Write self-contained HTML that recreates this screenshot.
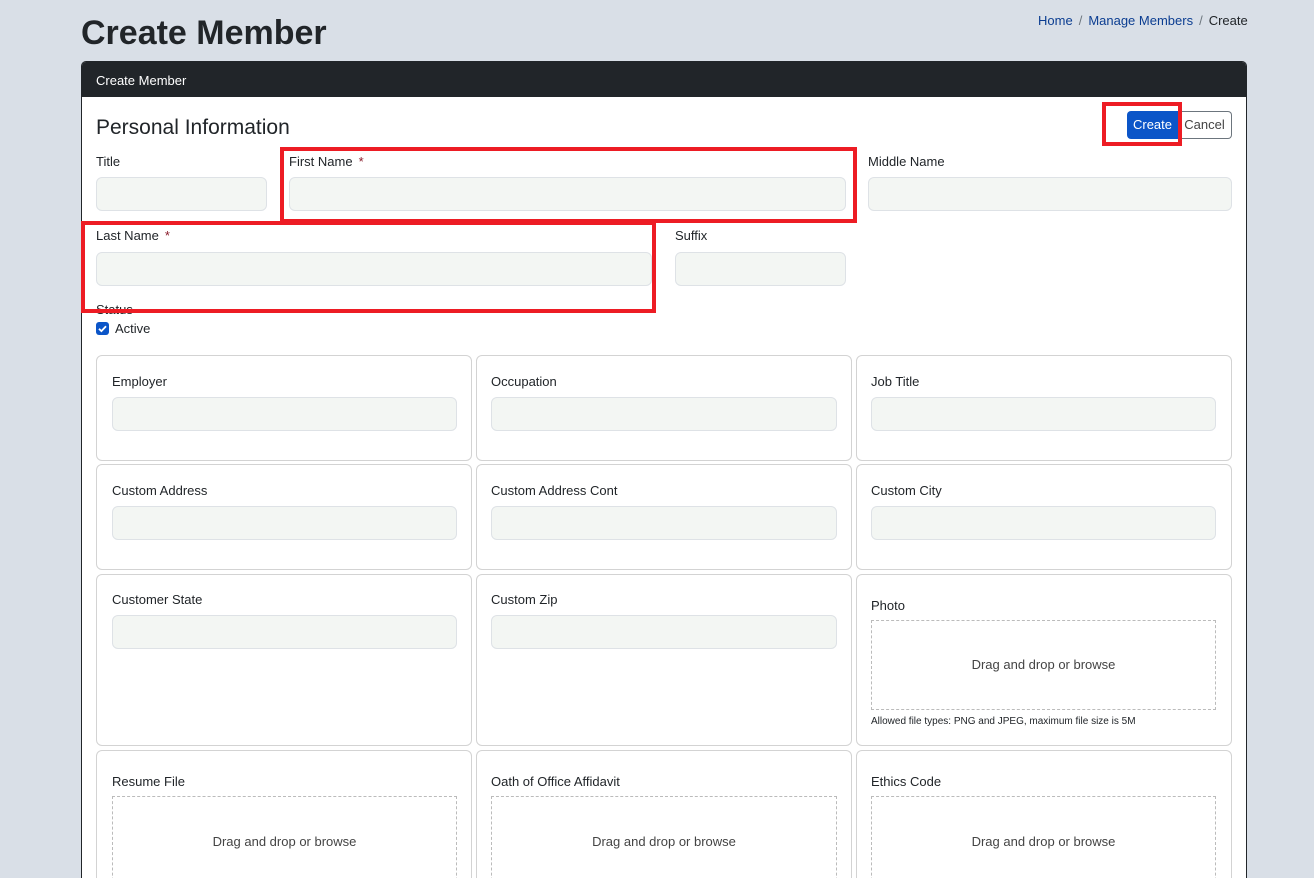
<!DOCTYPE html>
<html><head><meta charset="utf-8"><style>
*{box-sizing:border-box;margin:0;padding:0}
html,body{width:1314px;height:878px;overflow:hidden}
body{background:#d9dfe7;font-family:"Liberation Sans",sans-serif;color:#212529;position:relative}
.a{position:absolute}
h1{position:absolute;left:81px;top:14px;font-size:34px;font-weight:bold;color:#212529}
.bc{position:absolute;left:1038px;top:13px;font-size:13px;color:#212529}
.bc span.l{color:#0b3d91}
.bc .s{color:#6c757d;margin:0 6px}
.card{position:absolute;left:81px;top:61px;width:1166px;height:830px;background:#fff;border:1px solid #212529;border-radius:5px;overflow:hidden}
.hd{position:absolute;left:0;top:0;width:100%;height:35px;background:#212529;color:#fff;font-size:13px;padding:11px 14px}
.lb{position:absolute;font-size:13px;color:#212529}
.in{position:absolute;height:34px;background:#f3f6f3;border:1px solid #dee2e6;border-radius:6px}
.red{position:absolute;border:4px solid #ed1c24}
.box{position:absolute;border:1px solid #d3d3d3;border-radius:6px;background:#fff}
.dz{position:absolute;border:1px dashed #bbb;font-size:13px;color:#444;text-align:center}
.req{color:#8a1c2b;margin-left:6px}
#wrap{position:absolute;left:0;top:0;width:1314px;height:878px;overflow:hidden}
</style></head><body><div id="wrap">
<h1>Create Member</h1>
<div class="bc"><span class="l">Home</span><span class="s">/</span><span class="l">Manage Members</span><span class="s">/</span>Create</div>
<div class="card"><div class="hd">Create Member</div></div>

<div class="a" style="left:96px;top:116px;font-size:21px;color:#212529">Personal Information</div>
<div class="a" style="left:1127px;top:111px;width:51px;height:28px;background:#0b55c8;border-radius:4px 0 0 4px;color:#fff;font-size:13px;text-align:center;line-height:28px">Create</div>
<div class="a" style="left:1178px;top:111px;width:54px;height:28px;border:1px solid #6c757d;border-left:none;border-radius:0 4px 4px 0;color:#444;font-size:13px;text-align:center;line-height:26px">Cancel</div>

<div class="lb" style="left:96px;top:154px">Title</div>
<div class="in" style="left:96px;top:177px;width:171px"></div>
<div class="lb" style="left:289px;top:154px">First Name<span class="req">*</span></div>
<div class="in" style="left:289px;top:177px;width:557px"></div>
<div class="lb" style="left:868px;top:154px">Middle Name</div>
<div class="in" style="left:868px;top:177px;width:364px"></div>
<div class="lb" style="left:96px;top:228px">Last Name<span class="req">*</span></div>
<div class="in" style="left:96px;top:252px;width:556px"></div>
<div class="lb" style="left:675px;top:228px">Suffix</div>
<div class="in" style="left:675px;top:252px;width:171px"></div>
<div class="lb" style="left:96px;top:302px">Status</div>
<div class="a" style="left:96px;top:322px;width:13px;height:13px;background:#0b55c8;border-radius:3px"><svg width="13" height="13" viewBox="0 0 13 13"><path d="M3 6.8l2.4 2.3L10 4.2" stroke="#fff" stroke-width="1.8" fill="none"/></svg></div>
<div class="lb" style="left:115px;top:321px">Active</div>

<div class="red" style="left:280px;top:147px;width:577px;height:76px"></div>
<div class="red" style="left:81px;top:221px;width:575px;height:92px"></div>
<div class="red" style="left:1102px;top:102px;width:80px;height:44px"></div>

<div class="box" style="left:96px;top:355px;width:376px;height:106px"></div>
<div class="box" style="left:476px;top:355px;width:376px;height:106px"></div>
<div class="box" style="left:856px;top:355px;width:376px;height:106px"></div>
<div class="lb" style="left:112px;top:374px">Employer</div><div class="in" style="left:112px;top:397px;width:345px"></div>
<div class="lb" style="left:491px;top:374px">Occupation</div><div class="in" style="left:491px;top:397px;width:346px"></div>
<div class="lb" style="left:871px;top:374px">Job Title</div><div class="in" style="left:871px;top:397px;width:345px"></div>

<div class="box" style="left:96px;top:464px;width:376px;height:106px"></div>
<div class="box" style="left:476px;top:464px;width:376px;height:106px"></div>
<div class="box" style="left:856px;top:464px;width:376px;height:106px"></div>
<div class="lb" style="left:112px;top:483px">Custom Address</div><div class="in" style="left:112px;top:506px;width:345px"></div>
<div class="lb" style="left:491px;top:483px">Custom Address Cont</div><div class="in" style="left:491px;top:506px;width:346px"></div>
<div class="lb" style="left:871px;top:483px">Custom City</div><div class="in" style="left:871px;top:506px;width:345px"></div>

<div class="box" style="left:96px;top:574px;width:376px;height:172px"></div>
<div class="box" style="left:476px;top:574px;width:376px;height:172px"></div>
<div class="box" style="left:856px;top:574px;width:376px;height:172px"></div>
<div class="lb" style="left:112px;top:592px">Customer State</div><div class="in" style="left:112px;top:615px;width:345px"></div>
<div class="lb" style="left:491px;top:592px">Custom Zip</div><div class="in" style="left:491px;top:615px;width:346px"></div>
<div class="lb" style="left:871px;top:598px">Photo</div>
<div class="dz" style="left:871px;top:620px;width:345px;height:90px;line-height:88px">Drag and drop or browse</div>
<div class="a" style="left:871px;top:716px;font-size:10px;color:#212529">Allowed file types: PNG and JPEG, maximum file size is 5M</div>

<div class="box" style="left:96px;top:750px;width:376px;height:150px"></div>
<div class="box" style="left:476px;top:750px;width:376px;height:150px"></div>
<div class="box" style="left:856px;top:750px;width:376px;height:150px"></div>
<div class="lb" style="left:112px;top:774px">Resume File</div>
<div class="dz" style="left:112px;top:796px;width:345px;height:100px;line-height:90px">Drag and drop or browse</div>
<div class="lb" style="left:491px;top:774px">Oath of Office Affidavit</div>
<div class="dz" style="left:491px;top:796px;width:346px;height:100px;line-height:90px">Drag and drop or browse</div>
<div class="lb" style="left:871px;top:774px">Ethics Code</div>
<div class="dz" style="left:871px;top:796px;width:345px;height:100px;line-height:90px">Drag and drop or browse</div>
</div></body></html>
